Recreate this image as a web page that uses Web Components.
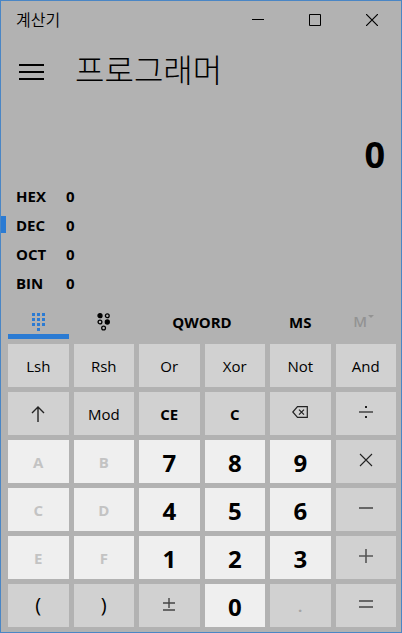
<!DOCTYPE html>
<html lang="ko">
<head>
<meta charset="utf-8">
<meta name="viewport" content="width=device-width, initial-scale=1">
<title>계산기</title>
<style>
  body {
    margin: 0;
    font-family: "Open Sans", "Noto Sans CJK KR", sans-serif;
    color: #000;
    --accent: #2b7bd3;
    --window: #b2b2b2;
    --key: #d1d1d1;
    --digit: #efefef;
  }
</style>
</head>
<body>
<calc-window></calc-window>

<script>
class CalcTitlebar extends HTMLElement {
  connectedCallback() {
    this.attachShadow({ mode: 'open' });
    this.shadowRoot.innerHTML = `
      <style>
        :host {
          display: flex;
          justify-content: space-between;
          height: 38px;
          padding: 0 1px 0 15px;
          font: 350 16px/36px "Noto Sans CJK KR", sans-serif;
        }
        div { display: flex; }
        button {
          display: grid;
          place-items: center;
          width: 57px;
          padding: 0;
          border: 0;
          background: none;
        }
        svg { fill: none; stroke: #000; }
      </style>
      <span><slot></slot></span>
      <div>
        <button aria-label="최소화"><svg width="12" height="12"><path d="M0 5.5h12"/></svg></button>
        <button aria-label="최대화"><svg width="12" height="12"><path d="M.5 .5h11v11H.5z"/></svg></button>
        <button aria-label="닫기"><svg width="12" height="12"><path d="M0 0l12 12M12 0L0 12" stroke-width="1.2"/></svg></button>
      </div>
    `;
  }
}

class CalcHeader extends HTMLElement {
  connectedCallback() {
    this.attachShadow({ mode: 'open' });
    this.shadowRoot.innerHTML = `
      <style>
        :host {
          display: flex;
          align-items: center;
          gap: 31px;
          height: 62px;
          padding-left: 18px;
        }
        button {
          display: flex;
          padding: 4px 0 0;
          border: 0;
          background: none;
        }
        h1 {
          margin: 0 0 4px;
          font: 300 32px/48px "Noto Sans CJK KR", sans-serif;
        }
      </style>
      <button aria-label="메뉴">
        <svg width="25" height="16"><path d="M0 1h25M0 8h25M0 15h25" stroke="#000" stroke-width="2"/></svg>
      </button>
      <h1><slot></slot></h1>
    `;
  }
}

class CalcDisplay extends HTMLElement {
  connectedCallback() {
    this.attachShadow({ mode: 'open' });
    this.shadowRoot.innerHTML = `
      <style>
        :host {
          display: flex;
          flex: 1;
          align-items: flex-end;
          justify-content: flex-end;
          padding: 0 16px 2px;
        }
        output { font: bold 36px/48px "Open Sans", sans-serif; }
      </style>
      <output><slot></slot></output>
    `;
  }
}

class CalcRadix extends HTMLElement {
  connectedCallback() {
    this.attachShadow({ mode: 'open' });
    this.shadowRoot.innerHTML = `
      <style>
        :host { display: block; }
        button {
          display: grid;
          grid-template-columns: 5px 45px auto;
          align-items: center;
          column-gap: 10px;
          width: 100%;
          height: 29px;
          padding: 0;
          border: 0;
          background: none;
          color: inherit;
          font: bold 15px/20px "Open Sans", sans-serif;
          text-align: left;
        }
        i { height: 17px; }
        .value { margin-left: -5px; }
        :host([selected]) i { background: var(--accent); }
      </style>
      <button><i></i><span><slot></slot></span><span class="value">${this.getAttribute('value')}</span></button>
    `;
  }
}

class CalcKey extends HTMLElement {
  connectedCallback() {
    this.attachShadow({ mode: 'open' });
    this.shadowRoot.innerHTML = `
      <style>
        :host { display: grid; min-width: 0; }
        button {
          display: grid;
          place-items: center;
          min-width: 0;
          padding: 0;
          border: 0;
          background: var(--key);
          color: #000;
          font: 15px/20px "Open Sans", sans-serif;
        }
        :host([bold]) button { font-weight: bold; }
        :host([digit]) button {
          padding-top: 2px;
          background: var(--digit);
          font-size: 24px;
          line-height: 32px;
          font-weight: bold;
        }
        :host([hex]) button {
          background: var(--digit);
          color: #c3c3c3;
          font-weight: bold;
        }
        :host([paren]) button { padding-bottom: 2px; font-size: 20px; }
        :host([point]) button { color: #a5a5a5; font-weight: bold; }
        :host([operator]) button { padding-bottom: 3px; }
        ::slotted(svg) { display: block; fill: none; stroke: #222; }
      </style>
      <button ${this.hasAttribute('disabled') ? 'disabled' : ''} aria-label="${this.getAttribute('label') || this.textContent.trim()}"><slot></slot></button>
    `;
  }
}

class CalcTool extends HTMLElement {
  connectedCallback() {
    this.attachShadow({ mode: 'open' });
    this.shadowRoot.innerHTML = `
      <style>
        :host { display: grid; min-width: 0; }
        :host([wide]) { grid-column: span 2; }
        button {
          display: grid;
          place-items: center;
          min-width: 0;
          padding: 5px 0 0;
          border: 0;
          border-bottom: 5px solid transparent;
          background: none;
          color: #000;
          font: bold 15px/20px "Open Sans", sans-serif;
        }
        :host([active]) button { border-color: var(--accent); }
        :host([disabled]) button {
          padding: 2px 4px 0 0;
          color: #939393;
          font-weight: 600;
        }
        .memory { display: flex; gap: 1px; }
        .memory svg { margin-top: 4px; fill: #939393; }
      </style>
      <button ${this.hasAttribute('disabled') ? 'disabled' : ''} aria-label="${this.getAttribute('label') || this.textContent.trim()}">
        ${this.hasAttribute('disabled')
          ? '<span class="memory"><slot></slot><svg width="6" height="4"><path d="M0 0h6L3 3z"/></svg></span>'
          : '<slot></slot>'}
      </button>
    `;
  }
}

class CalcWindow extends HTMLElement {
  connectedCallback() {
    this.attachShadow({ mode: 'open' });
    this.shadowRoot.innerHTML = `
      <style>
        :host {
          display: flex;
          flex-direction: column;
          box-sizing: border-box;
          min-height: 100vh;
          border: 1px solid #4a86c5;
          background: var(--window);
        }
        .tools, .keys {
          display: grid;
          grid-template-columns: repeat(6, minmax(0, 1fr));
          gap: 5px;
          padding: 0 5px 0 7px;
        }
        .tools { grid-auto-rows: 34px; margin: 8px 0 5px; }
        .keys { grid-auto-rows: 43px; padding-bottom: 5px; }
      </style>
      <calc-titlebar>계산기</calc-titlebar>
      <calc-header>프로그래머</calc-header>
      <calc-display>0</calc-display>
      <section>
        <calc-radix value="0">HEX</calc-radix>
        <calc-radix value="0" selected>DEC</calc-radix>
        <calc-radix value="0">OCT</calc-radix>
        <calc-radix value="0">BIN</calc-radix>
      </section>
      <div class="tools">
        <calc-tool active label="전체 키패드">
          <svg width="13" height="18" fill="#2b7bd3"><path d="M0 0h3v3H0zM5 0h3v3H5zM10 0h3v3h-3zM0 5h3v3H0zM5 5h3v3H5zM10 5h3v3h-3zM0 10h3v3H0zM5 10h3v3H5zM10 10h3v3h-3zM5 15h3v3H5z"/></svg>
        </calc-tool>
        <calc-tool label="비트 전환 키패드">
          <svg width="14" height="18" fill="none" stroke="#000" stroke-width="1.3">
            <circle cx="3" cy="2.7" r="2" fill="#000"/><circle cx="10.3" cy="2.7" r="1.9"/>
            <circle cx="3" cy="9" r="1.9"/><circle cx="10.3" cy="9" r="2" fill="#000"/>
            <circle cx="6.6" cy="15" r="1.9"/>
          </svg>
        </calc-tool>
        <calc-tool wide>QWORD</calc-tool>
        <calc-tool>MS</calc-tool>
        <calc-tool disabled>M</calc-tool>
      </div>
      <div class="keys">
        <calc-key>Lsh</calc-key>
        <calc-key>Rsh</calc-key>
        <calc-key>Or</calc-key>
        <calc-key>Xor</calc-key>
        <calc-key>Not</calc-key>
        <calc-key>And</calc-key>

        <calc-key label="위로"><svg width="14" height="16" stroke-width="1.4"><path d="M7 16V1M1 7l6-6 6 6"/></svg></calc-key>
        <calc-key>Mod</calc-key>
        <calc-key bold>CE</calc-key>
        <calc-key bold>C</calc-key>
        <calc-key operator label="백스페이스"><svg width="16" height="12" stroke-width="1.2"><path d="M5.5 .6h9.8v10.8H5.5L.8 6zM7 3.6l5 5M12 3.6l-5 5"/></svg></calc-key>
        <calc-key operator label="나누기"><svg width="14" height="14"><path d="M0 7h14" stroke="#666" stroke-width="2"/><path d="M6 2h2M6 12h2" stroke-width="2"/></svg></calc-key>

        <calc-key hex disabled>A</calc-key>
        <calc-key hex disabled>B</calc-key>
        <calc-key digit>7</calc-key>
        <calc-key digit>8</calc-key>
        <calc-key digit>9</calc-key>
        <calc-key operator label="곱하기"><svg width="14" height="14"><path d="M1 1l12 12M13 1L1 13" stroke-width="1.1"/></svg></calc-key>

        <calc-key hex disabled>C</calc-key>
        <calc-key hex disabled>D</calc-key>
        <calc-key digit>4</calc-key>
        <calc-key digit>5</calc-key>
        <calc-key digit>6</calc-key>
        <calc-key operator label="빼기"><svg width="14" height="14"><path d="M0 7h14" stroke="#666" stroke-width="2"/></svg></calc-key>

        <calc-key hex disabled>E</calc-key>
        <calc-key hex disabled>F</calc-key>
        <calc-key digit>1</calc-key>
        <calc-key digit>2</calc-key>
        <calc-key digit>3</calc-key>
        <calc-key operator label="더하기"><svg width="14" height="14"><path d="M0 7h14M7 0v14" stroke="#555" stroke-width="1.6"/></svg></calc-key>

        <calc-key paren>(</calc-key>
        <calc-key paren>)</calc-key>
        <calc-key operator label="양수 음수"><svg width="12" height="14"><path d="M0 6h12M6 1v10M0 13h12" stroke="#444" stroke-width="1.4"/></svg></calc-key>
        <calc-key digit>0</calc-key>
        <calc-key point disabled>.</calc-key>
        <calc-key operator label="같음"><svg width="14" height="8"><path d="M0 1h14M0 7h14" stroke="#444" stroke-width="1.5"/></svg></calc-key>
      </div>
    `;
  }
}

customElements.define('calc-titlebar', CalcTitlebar);
customElements.define('calc-header', CalcHeader);
customElements.define('calc-display', CalcDisplay);
customElements.define('calc-radix', CalcRadix);
customElements.define('calc-key', CalcKey);
customElements.define('calc-tool', CalcTool);
customElements.define('calc-window', CalcWindow);
</script>
</body>
</html>
